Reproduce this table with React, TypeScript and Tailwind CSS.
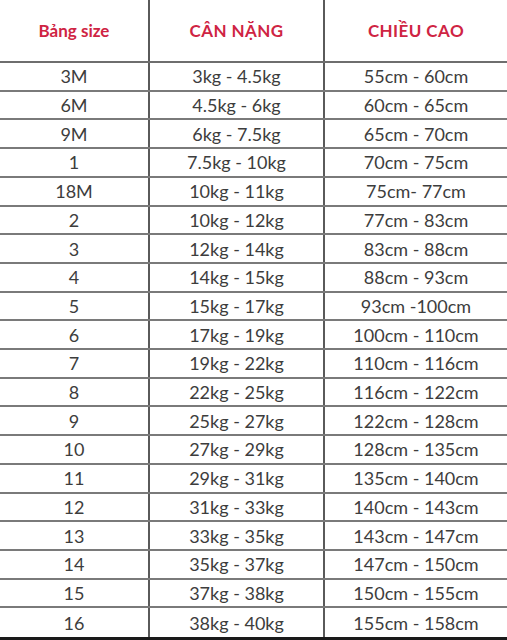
import React from 'react';

const rows: [string, string, string][] = [
  ['3M', '3kg - 4.5kg', '55cm - 60cm'],
  ['6M', '4.5kg - 6kg', '60cm - 65cm'],
  ['9M', '6kg - 7.5kg', '65cm - 70cm'],
  ['1', '7.5kg - 10kg', '70cm - 75cm'],
  ['18M', '10kg - 11kg', '75cm- 77cm'],
  ['2', '10kg - 12kg', '77cm - 83cm'],
  ['3', '12kg - 14kg', '83cm - 88cm'],
  ['4', '14kg - 15kg', '88cm - 93cm'],
  ['5', '15kg - 17kg', '93cm -100cm'],
  ['6', '17kg - 19kg', '100cm - 110cm'],
  ['7', '19kg - 22kg', '110cm - 116cm'],
  ['8', '22kg - 25kg', '116cm - 122cm'],
  ['9', '25kg - 27kg', '122cm - 128cm'],
  ['10', '27kg - 29kg', '128cm - 135cm'],
  ['11', '29kg - 31kg', '135cm - 140cm'],
  ['12', '31kg - 33kg', '140cm - 143cm'],
  ['13', '33kg - 35kg', '143cm - 147cm'],
  ['14', '35kg - 37kg', '147cm - 150cm'],
  ['15', '37kg - 38kg', '150cm - 155cm'],
  ['16', '38kg - 40kg', '155cm - 158cm'],
];

const cell = 'flex items-center justify-center';

export default function App() {
  return (
    <div className="w-[507px] h-[640px] bg-white overflow-hidden flex flex-col font-['Lato','Liberation_Sans',sans-serif]">
      <div className="h-[637px] grid grid-rows-[63px_repeat(20,minmax(0,1fr))]">
        {/* header */}
        <div className="grid grid-cols-[150px_175px_1fr] border-b-2 border-[#6e6e6e] text-[#cf2443] font-bold">
          <div className={`${cell} border-r-2 border-[#5a5a5a] text-[17px]`}>Bảng size</div>
          <div className={`${cell} border-r-2 border-[#5a5a5a] text-[17px] tracking-wide`}>CÂN NẶNG</div>
          <div className={`${cell} text-[17px] tracking-wide`}>CHIỀU CAO</div>
        </div>
        {rows.map(([size, weight, height], i) => (
          <div
            key={size + i}
            className={`grid grid-cols-[150px_175px_1fr] text-[18px] text-[#3d3d3d] leading-none ${
              i < rows.length - 1 ? 'border-b-2 border-[#7a7a7a]' : ''
            }`}
          >
            <div className={`${cell} border-r-2 border-[#5a5a5a]`}>{size}</div>
            <div className={`${cell} border-r-2 border-[#5a5a5a]`}>{weight}</div>
            <div className={cell}>{height}</div>
          </div>
        ))}
      </div>
      <div className="h-[3px] bg-[#1a1a1a]" />
    </div>
  );
}
